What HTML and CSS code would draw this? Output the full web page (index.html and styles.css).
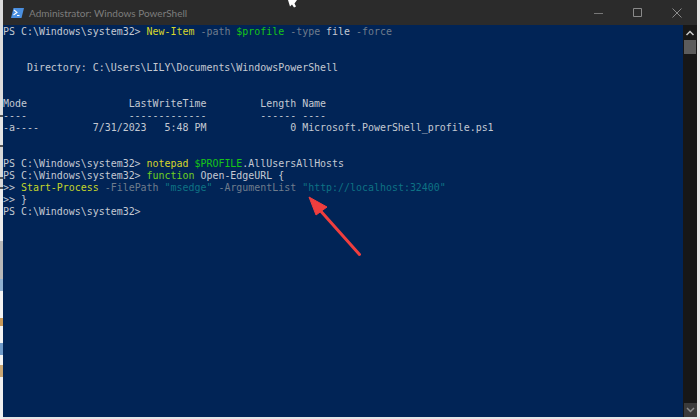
FILE: index.html
```html
<!DOCTYPE html>
<html lang="en">
<head>
<meta charset="utf-8">
<title>Administrator: Windows PowerShell</title>
<link rel="stylesheet" href="styles.css">
</head>
<body>
<div class="desk-strip">
  <span class="bit bit-a"></span>
  <span class="bit bit-line"></span>
  <span class="bit bit-gap1"></span>
  <span class="bit bit-line"></span>
  <span class="bit bit-gap2"></span>
  <span class="bit bit-line"></span>
  <span class="bit bit-gap3"></span>
  <span class="bit bit-line"></span>
  <span class="bit bit-gap4"></span>
  <span class="bit bit-band"></span>
  <span class="bit bit-blue"></span>
  <span class="bit bit-gap5"></span>
  <span class="bit bit-orange"></span>
  <span class="bit bit-gap6"></span>
  <span class="bit bit-blue2"></span>
  <span class="bit bit-gap7"></span>
  <span class="bit bit-orange2"></span>
</div>
<main class="window">
  <header class="titlebar">
    <svg class="ps-icon" width="13" height="10" viewBox="0 0 13 10"><path d="M2.500 0H13l-2.500 10H0z" fill="#4a8fe0"/><path d="M3 2l3 2.500-3.500 2.500M6 7.500h2.500" fill="none" stroke="#fff" stroke-width="1.100"/></svg>
    <span class="title">Administrator: Windows PowerShell</span>
    <span class="controls">
      <svg width="10" height="10" viewBox="0 0 10 10"><path d="M0 5.500h9" stroke="#777" fill="none"/></svg>
      <svg width="10" height="10" viewBox="0 0 10 10"><path d="M.5.5h8v8h-8z" stroke="#8a8a8a" fill="none"/></svg>
      <svg width="10" height="10" viewBox="0 0 10 10"><path d="M.5.5l9 9M9.500.5l-9 9" stroke="#8a8a8a" fill="none"/></svg>
    </span>
  </header>
  <div class="body">
    <div class="console">
      <div class="line">PS C:\Windows\system32&gt; <span class="cmd">New-Item</span> <span class="param">-path</span> <span class="var">$profile</span> <span class="param">-type</span> file <span class="param">-force</span></div>
      <div class="line blank"></div>
      <div class="line blank"></div>
      <div class="line">    Directory: C:\Users\LILY\Documents\WindowsPowerShell</div>
      <div class="line blank"></div>
      <div class="line blank"></div>
      <div class="line">Mode                 LastWriteTime         Length Name</div>
      <div class="line">----                 -------------         ------ ----</div>
      <div class="line">-a----         7/31/2023   5:48 PM              0 Microsoft.PowerShell_profile.ps1</div>
      <div class="line blank"></div>
      <div class="line blank"></div>
      <div class="line">PS C:\Windows\system32&gt; <span class="cmd">notepad</span> <span class="var">$PROFILE</span>.AllUsersAllHosts</div>
      <div class="line">PS C:\Windows\system32&gt; <span class="kw">function</span> Open-EdgeURL {</div>
      <div class="line">&gt;&gt; <span class="cmd2">Start-Process</span> <span class="param">-FilePath</span> <span class="str">"msedge"</span> <span class="param">-ArgumentList</span> <span class="str">"http://localhost:32400"</span></div>
      <div class="line">&gt;&gt; }</div>
      <div class="line">PS C:\Windows\system32&gt;</div>
    </div>
    <aside class="scrollbar">
      <svg width="14" height="15" viewBox="0 0 14 15"><path d="M3.500 10l3.500-3.500L10.500 10" fill="none" stroke="#c8c8c8" stroke-width="1.500"/></svg>
      <span class="thumb"></span>
      <span class="track"></span>
      <span class="down"><svg width="13" height="10" viewBox="0 0 13 10"><path d="M3 3l3.500 3.500L10 3" fill="none" stroke="#8c8c8c" stroke-width="1.500"/></svg></span>
    </aside>
    <svg class="arrow" width="70" height="70" viewBox="0 0 70 70"><path d="M59.500 64.500L18 18" stroke="#ef3e3e" stroke-width="3" stroke-linecap="round" fill="none"/><path d="M9 7l18 10-11 8z" fill="#ef3e3e" stroke="#ef3e3e" stroke-linejoin="round"/></svg>
  </div>
</main>
<svg class="cursor" width="10" height="8" viewBox="0 0 10 8"><path d="M0 0h9L6.500 3.500 8 6.500 6 7.500 4 4.500 2 6.500z" fill="#fff"/></svg>
</body>
</html>
```
FILE: styles.css
```css
html, body {
  margin: 0;
  padding: 0;
  width: 700px;
  height: 419px;
  overflow: hidden;
  background: #e6e6e6;
}
body {
  display: flex;
  position: relative;
  align-items: flex-start;
}
.desk-strip {
  width: 3px;
  height: 419px;
  flex: none;
  display: flex;
  flex-direction: column;
  background: #f0f0f0;
}
.bit { display: block; width: 3px; flex: none; }
.bit-a { height: 115px; background: #dcdcdc; }
.bit-line { height: 2px; background: #555; }
.bit-gap1 { height: 28px; background: #e4e4e4; }
.bit-gap2 { height: 30px; background: #d8d8d8; }
.bit-gap3 { height: 8px; background: #d8d8d8; }
.bit-gap4 { height: 52px; background: #ececec; }
.bit-band { height: 38px; background: #b8b8b8; }
.bit-blue { height: 12px; background: #8fb0d0; }
.bit-gap5 { height: 27px; background: #f4f4f4; }
.bit-orange { height: 8px; background: #c99a5a; }
.bit-gap6 { height: 17px; background: #f4f4f4; }
.bit-blue2 { height: 12px; background: #6f9ac8; }
.bit-gap7 { height: 10px; background: #f4f4f4; }
.bit-orange2 { height: 12px; background: #c9a774; }
.window {
  width: 694px;
  height: 417px;
  flex: none;
  display: flex;
  flex-direction: column;
}
.titlebar {
  height: 25px;
  flex: none;
  background: #2b2b2b;
  display: flex;
  align-items: center;
  padding-left: 8px;
  font: 10px "Lato", "Liberation Sans", sans-serif;
  color: #7d7d7d;
}
.ps-icon { margin-right: 5px; }
.title { flex: 1; }
.controls {
  display: flex;
  gap: 29px;
  align-items: center;
  padding-right: 15px;
}
.body {
  flex: 1;
  display: flex;
  background: #012456;
  position: relative;
  min-height: 0;
}
.console {
  flex: 1;
  padding-top: 1px;
  font: 9.95px/12px "DejaVu Sans Mono", monospace;
  color: #c4c9d2;
}
.line {
  height: 12px;
  white-space: pre;
}
.cmd { color: #d6d62a; }
.cmd2 { color: #c4d62a; }
.param { color: #6f7c8c; }
.var { color: #17c417; }
.kw { color: #6fd11f; }
.str { color: #0e7284; }
.scrollbar {
  width: 14px;
  flex: none;
  background: #171717;
  display: flex;
  flex-direction: column;
  align-items: stretch;
}
.scrollbar svg { display: block; }
.thumb { height: 14px; margin: 0 1px; background: #5c5c5c; }
.track { flex: 1; }
.down {
  height: 14px;
  margin-left: 1px;
  background: #3a3a3a;
  display: flex;
  justify-content: center;
  align-items: center;
}
.arrow {
  position: absolute;
  left: 297px;
  top: 165px;
}
.cursor {
  position: absolute;
  left: 288px;
  top: 0;
}
```
